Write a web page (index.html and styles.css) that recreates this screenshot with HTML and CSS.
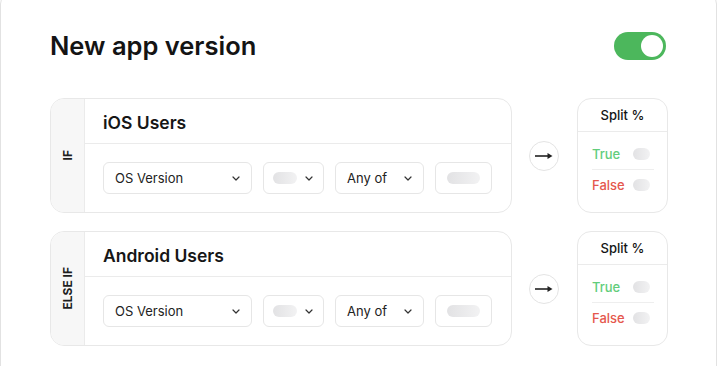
FILE: index.html
```html
<!DOCTYPE html>
<html lang="en">
<head>
    <meta charset="UTF-8">
    <meta name="viewport" content="width=device-width, initial-scale=1.0">
    <title>New app version</title>
    <link rel="stylesheet" href="styles.css">
</head>
<body>
    <div class="panel">
        <div class="panel-head">
            <h1>New app version</h1>
            <span class="toggle"><span class="knob"></span></span>
        </div>

        <div class="rules">
            <div class="rule">
                <div class="cond">
                    <div class="cond-label"><span>IF</span></div>
                    <div class="cond-body">
                        <div class="cond-title">iOS Users</div>
                        <div class="cond-fields">
                            <div class="select sel-field">
                                <span>OS Version</span>
                                <svg class="chev" width="8" height="5" viewBox="0 0 8 5"><path d="M1 1l3 3 3-3" fill="none" stroke="#333" stroke-width="1.2" stroke-linecap="round" stroke-linejoin="round"/></svg>
                            </div>
                            <div class="select sel-op">
                                <span class="pill pill-sm"></span>
                                <svg class="chev" width="8" height="5" viewBox="0 0 8 5"><path d="M1 1l3 3 3-3" fill="none" stroke="#333" stroke-width="1.2" stroke-linecap="round" stroke-linejoin="round"/></svg>
                            </div>
                            <div class="select sel-any">
                                <span>Any of</span>
                                <svg class="chev" width="8" height="5" viewBox="0 0 8 5"><path d="M1 1l3 3 3-3" fill="none" stroke="#333" stroke-width="1.2" stroke-linecap="round" stroke-linejoin="round"/></svg>
                            </div>
                            <div class="select sel-value">
                                <span class="pill pill-lg"></span>
                            </div>
                        </div>
                    </div>
                </div>
                <div class="arrow">
                    <svg width="18" height="8" viewBox="0 0 18 8"><path d="M0 4H14" stroke="#222" stroke-width="1.6"/><path d="M12.5 1L17.5 4L12.5 7Z" fill="#222"/></svg>
                </div>
                <div class="split">
                    <div class="split-head">Split %</div>
                    <div class="split-rows">
                        <div class="split-row"><span class="yes">True</span><span class="pill pill-xs"></span></div>
                        <div class="split-row"><span class="no">False</span><span class="pill pill-xs"></span></div>
                    </div>
                </div>
            </div>

            <div class="rule">
                <div class="cond">
                    <div class="cond-label"><span>ELSE IF</span></div>
                    <div class="cond-body">
                        <div class="cond-title">Android Users</div>
                        <div class="cond-fields">
                            <div class="select sel-field">
                                <span>OS Version</span>
                                <svg class="chev" width="8" height="5" viewBox="0 0 8 5"><path d="M1 1l3 3 3-3" fill="none" stroke="#333" stroke-width="1.2" stroke-linecap="round" stroke-linejoin="round"/></svg>
                            </div>
                            <div class="select sel-op">
                                <span class="pill pill-sm"></span>
                                <svg class="chev" width="8" height="5" viewBox="0 0 8 5"><path d="M1 1l3 3 3-3" fill="none" stroke="#333" stroke-width="1.2" stroke-linecap="round" stroke-linejoin="round"/></svg>
                            </div>
                            <div class="select sel-any">
                                <span>Any of</span>
                                <svg class="chev" width="8" height="5" viewBox="0 0 8 5"><path d="M1 1l3 3 3-3" fill="none" stroke="#333" stroke-width="1.2" stroke-linecap="round" stroke-linejoin="round"/></svg>
                            </div>
                            <div class="select sel-value">
                                <span class="pill pill-lg"></span>
                            </div>
                        </div>
                    </div>
                </div>
                <div class="arrow">
                    <svg width="18" height="8" viewBox="0 0 18 8"><path d="M0 4H14" stroke="#222" stroke-width="1.6"/><path d="M12.5 1L17.5 4L12.5 7Z" fill="#222"/></svg>
                </div>
                <div class="split">
                    <div class="split-head">Split %</div>
                    <div class="split-rows">
                        <div class="split-row"><span class="yes">True</span><span class="pill pill-xs"></span></div>
                        <div class="split-row"><span class="no">False</span><span class="pill pill-xs"></span></div>
                    </div>
                </div>
            </div>
        </div>
    </div>
</body>
</html>
```

FILE: styles.css
```css
* {
    margin: 0;
    padding: 0;
    box-sizing: border-box;
}

body {
    background: #fff;
    font-family: Inter, "Noto Sans", sans-serif;
    color: #161616;
    overflow: hidden;
}

.panel {
    width: 717px;
    margin-top: -10px;
    border: 1px solid #e2e2e2;
    border-radius: 14px;
    padding: 40px 48px 40px 49px;
}

.panel-head {
    display: flex;
    justify-content: space-between;
    align-items: center;
    height: 30px;
}

.panel-head h1 {
    font-size: 25.5px;
    line-height: 30px;
    font-weight: 600;
    color: #141414;
}

.toggle {
    display: flex;
    justify-content: flex-end;
    align-items: center;
    width: 52px;
    height: 28px;
    padding: 0 3px;
    margin-right: 2px;
    border-radius: 14px;
    background: #4cb75c;
}

.knob {
    width: 22px;
    height: 22px;
    border-radius: 50%;
    background: #fff;
}

.rules {
    display: flex;
    flex-direction: column;
    gap: 18px;
    margin-top: 37px;
}

.rule {
    display: flex;
    align-items: stretch;
}

.cond {
    display: flex;
    width: 462px;
    border: 1px solid #e8e8e8;
    border-radius: 14px;
    overflow: hidden;
}

.cond-label {
    display: flex;
    justify-content: center;
    align-items: center;
    width: 34px;
    background: #f7f7f7;
    border-right: 1px solid #ebebeb;
}

.cond-label span {
    writing-mode: vertical-rl;
    transform: rotate(180deg);
    font-size: 12px;
    font-weight: 700;
    color: #1e1e1e;
}

.cond-body {
    flex: 1;
}

.cond-title {
    height: 45px;
    padding: 14px 18px 0;
    border-bottom: 1px solid #ebebeb;
    font-size: 17.5px;
    line-height: 20px;
    font-weight: 600;
    color: #161616;
}

.cond-fields {
    display: flex;
    align-items: center;
    gap: 11px;
    height: 68px;
    padding: 0 18px;
}

.select {
    display: flex;
    justify-content: space-between;
    align-items: center;
    height: 32px;
    padding: 0 11px;
    border: 1px solid #e6e6e6;
    border-radius: 6px;
    font-size: 13px;
    color: #222;
}

.sel-field { width: 149px; }
.sel-op { width: 61px; padding: 0 10px 0 9px; }
.sel-any { width: 89px; }
.sel-value { width: 57px; justify-content: center; }

.chev {
    display: block;
    flex-shrink: 0;
}

.pill {
    display: block;
    height: 12px;
    border-radius: 6px;
    background: linear-gradient(90deg, #e2e2e4, #f2f2f3);
}

.pill-sm { width: 24px; }
.pill-lg { width: 34px; }
.pill-xs { width: 17px; }

.arrow {
    align-self: center;
    display: flex;
    justify-content: center;
    align-items: center;
    width: 30px;
    height: 30px;
    margin: 0 18px 0 17px;
    border: 1px solid #e4e4e4;
    border-radius: 50%;
}

.arrow svg {
    display: block;
}

.split {
    width: 91px;
    border: 1px solid #e8e8e8;
    border-radius: 14px;
}

.split-head {
    height: 33px;
    border-bottom: 1px solid #ebebeb;
    text-align: center;
    font-size: 13px;
    line-height: 32px;
    font-weight: 500;
    color: #141414;
}

.split-rows {
    padding: 7px 13px 0 14px;
}

.split-row {
    display: flex;
    justify-content: space-between;
    align-items: center;
    height: 30px;
    padding-right: 4px;
    font-size: 13px;
    font-weight: 500;
}

.split-row:first-child {
    height: 31px;
    border-bottom: 1px solid #eeeeee;
}

.yes { color: #62cd7b; }
.no { color: #e5574d; }
```
